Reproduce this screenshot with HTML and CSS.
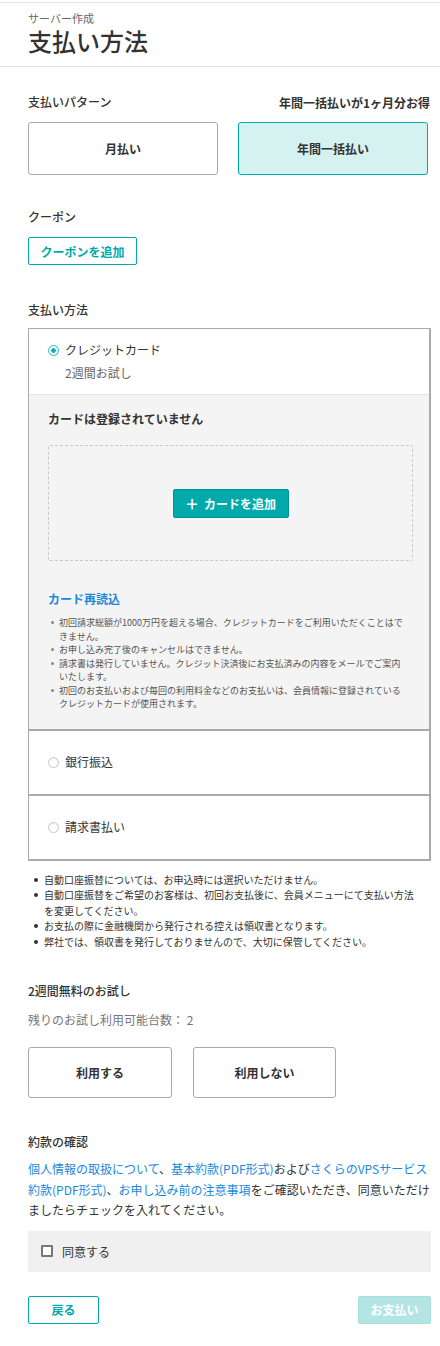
FILE: index.html
```html
<!DOCTYPE html>
<html lang="ja">
<head>
<meta charset="utf-8">
<link rel="stylesheet" href="styles.css">
</head>
<body>
<header class="header">
  <div class="sub">サーバー作成</div>
  <h1 class="title">支払い方法</h1>
</header>
<main class="main">
  <div class="pattern-head">
    <span class="label">支払いパターン</span>
    <span class="promo">年間一括払いが1ヶ月分お得</span>
  </div>
  <div class="pattern-row">
    <button class="choice">月払い</button>
    <button class="choice choice-active">年間一括払い</button>
  </div>

  <div class="label coupon-label">クーポン</div>
  <button class="btn-outline coupon-btn">クーポンを追加</button>

  <div class="label method-label">支払い方法</div>
  <div class="panel">
    <div class="opt opt-card">
      <div class="radio-row"><span class="radio radio-on"></span><span>クレジットカード</span></div>
      <div class="trial">2週間お試し</div>
    </div>
    <div class="card-area">
      <div class="card-none">カードは登録されていません</div>
      <div class="dropzone">
        <button class="btn-fill"><span class="plus">＋</span>カードを追加</button>
      </div>
      <a class="reload">カード再読込</a>
      <ul class="notes-small">
        <li>初回請求総額が1000万円を超える場合、クレジットカードをご利用いただくことはできません。</li>
        <li>お申し込み完了後のキャンセルはできません。</li>
        <li>請求書は発行していません。クレジット決済後にお支払済みの内容をメールでご案内いたします。</li>
        <li>初回のお支払いおよび毎回の利用料金などのお支払いは、会員情報に登録されているクレジットカードが使用されます。</li>
      </ul>
    </div>
    <div class="opt opt-plain">
      <div class="radio-row"><span class="radio"></span><span>銀行振込</span></div>
    </div>
    <div class="opt opt-plain opt-last">
      <div class="radio-row"><span class="radio"></span><span>請求書払い</span></div>
    </div>
  </div>
  <ul class="notes">
    <li>自動口座振替については、お申込時には選択いただけません。</li>
    <li>自動口座振替をご希望のお客様は、初回お支払後に、会員メニューにて支払い方法を変更してください。</li>
    <li>お支払の際に金融機関から発行される控えは領収書となります。</li>
    <li>弊社では、領収書を発行しておりませんので、大切に保管してください。</li>
  </ul>

  <div class="label trial-label">2週間無料のお試し</div>
  <div class="remain">残りのお試し利用可能台数： 2</div>
  <div class="trial-row">
    <button class="choice small">利用する</button>
    <button class="choice small">利用しない</button>
  </div>

  <div class="label terms-label">約款の確認</div>
  <p class="terms"><a class="link">個人情報の取扱について</a>、<a class="link">基本約款(PDF形式)</a>および<a class="link">さくらのVPSサービス約款(PDF形式)</a>、<a class="link">お申し込み前の注意事項</a>をご確認いただき、同意いただけましたらチェックを入れてください。</p>
  <label class="agree"><span class="checkbox"></span><span>同意する</span></label>

  <div class="actions">
    <button class="btn-outline back-btn">戻る</button>
    <button class="btn-disabled">お支払い</button>
  </div>
</main>
</body>
</html>
```
FILE: styles.css
```css
* { box-sizing: border-box; }
body {
  margin: 0;
  font-family: "Noto Sans CJK JP", "Noto Sans", sans-serif;
  color: #333;
  background: #fff;
}
button { font-family: inherit; cursor: pointer; }
.header {
  margin-top: 2px;
  border-top: 1px solid #e6e6e6;
  border-bottom: 1px solid #e3e3e3;
  padding: 8px 28px 9px;
}
.sub { font-size: 11px; line-height: 14px; color: #666; }
.title { margin: 0; font-size: 24px; line-height: 32px; font-weight: 500; color: #333; }
.main { width: 403px; margin-left: 28px; padding-bottom: 20px; }
.label { font-size: 12px; line-height: 18px; font-weight: 500; color: #333; }
.pattern-head {
  margin-top: 26px;
  display: flex; justify-content: space-between; align-items: center;
  height: 18px;
}
.promo { font-size: 12px; font-weight: 700; margin-right: 1px; }
.pattern-row {
  margin-top: 11px;
  display: grid; grid-template-columns: 190px 190px; column-gap: 20px;
}
.choice {
  height: 53px;
  background: #fff;
  border: 1px solid #aaa;
  border-radius: 3px;
  font-size: 12px;
  font-weight: 700;
  color: #333;
}
.choice-active { background: #d5f1f0; border-color: #00abab; }
.coupon-label { margin-top: 33px; }
.btn-outline {
  display: block;
  height: 28px;
  background: #fff;
  border: 1px solid #00aaaa;
  border-radius: 2px;
  color: #00aaaa;
  font-size: 12px;
  font-weight: 700;
}
.coupon-btn { margin-top: 11px; width: 109px; padding: 0; }
.method-label { margin-top: 36px; }
.panel {
  margin-top: 9px;
  border: 1px solid #aaa;
  border-right-width: 2px;
  border-bottom-width: 2px;
}
.opt { background: #fff; }
.opt-card { padding: 12px 0 12px 19px; border-bottom: 1px solid #e4e4e4; }
.radio-row { display: flex; align-items: center; font-size: 12px; line-height: 18px; color: #333; }
.radio {
  width: 11px; height: 11px; border-radius: 50%;
  border: 1px solid #c8c8c8; background: #fff;
  margin: 0 6px 0 0; flex: none;
  box-shadow: inset 0 1px 1px rgba(0,0,0,0.08);
}
.radio-on {
  border: 1.5px solid #2bbccb;
  background: radial-gradient(circle, #1fa7b5 0 2px, #e9f8f9 2.5px);
  box-shadow: none;
}
.trial { margin-top: 5px; padding-left: 17px; font-size: 12px; line-height: 18px; color: #666; }
.card-area {
  background: #f4f4f4;
  padding: 15px 16px 18px 19px;
  border-bottom: 2px solid #aaa;
}
.card-none { font-size: 12px; line-height: 18px; font-weight: 700; color: #333; }
.dropzone {
  margin-top: 17px;
  height: 116px;
  border: 1px dashed #c9c9c9;
  border-radius: 2px;
  display: flex; align-items: center; justify-content: center;
}
.btn-fill {
  height: 29px; width: 116px;
  background: #00aaaa;
  border: 1px solid #08928f;
  border-radius: 2px;
  color: #fff;
  font-size: 12px; font-weight: 700;
  display: flex; align-items: center; justify-content: center;
  padding: 0;
}
.plus { font-size: 14px; margin-right: 5px; font-weight: 700; }
.reload {
  display: block; margin-top: 29px;
  font-size: 12px; line-height: 18px; font-weight: 700; color: #1a88dc;
}
.notes-small {
  list-style: none; margin: 8px 0 0; padding: 0 4px 0 11px;
  font-size: 9px; line-height: 13.5px; color: #555;
}
.notes-small li { position: relative; }
.notes-small li::before {
  content: ""; position: absolute; left: -8px; top: 5px;
  width: 3px; height: 3px; border-radius: 50%; background: #888;
}
.opt-plain {
  height: 65px;
  display: flex; align-items: center;
  padding-left: 19px;
  border-bottom: 2px solid #aaa;
}
.opt-last { border-bottom: none; height: 63px; }
.notes {
  list-style: none; margin: 11px 0 0; padding: 0 12px 0 16px;
  font-size: 10px; line-height: 15.5px; color: #333;
}
.notes li { position: relative; }
.notes li::before {
  content: ""; position: absolute; left: -10px; top: 6px;
  width: 4px; height: 4px; border-radius: 50%; background: #333;
}
.trial-label { margin-top: 33px; }
.remain { margin-top: 11px; font-size: 12px; line-height: 18px; color: #777; }
.trial-row { margin-top: 18px; display: flex; gap: 21px; }
.choice.small { height: 51px; width: 144px; }
.trial-row .choice.small + .choice.small { width: 143px; }
.terms-label { margin-top: 35px; }
.terms {
  margin: 8px 0 0;
  font-size: 12px; line-height: 20.5px; color: #333;
}
.link { color: #1a88dc; text-decoration: none; }
.agree {
  margin-top: 10px;
  height: 41px;
  background: #f0f0f0;
  display: flex; align-items: center;
  padding-left: 13px;
  font-size: 12px; color: #333;
}
.checkbox {
  width: 12px; height: 12px;
  border: 2px solid #777; border-radius: 1px; background: #fff;
  margin-right: 9px;
}
.actions { margin-top: 24px; display: flex; justify-content: space-between; }
.back-btn { width: 71px; }
.btn-disabled {
  width: 73px; height: 28px;
  background: #b3e5e5; border: 1px solid #a9dede; border-radius: 2px;
  color: #fff; font-size: 12px; font-weight: 700;
  padding: 0;
}
```
